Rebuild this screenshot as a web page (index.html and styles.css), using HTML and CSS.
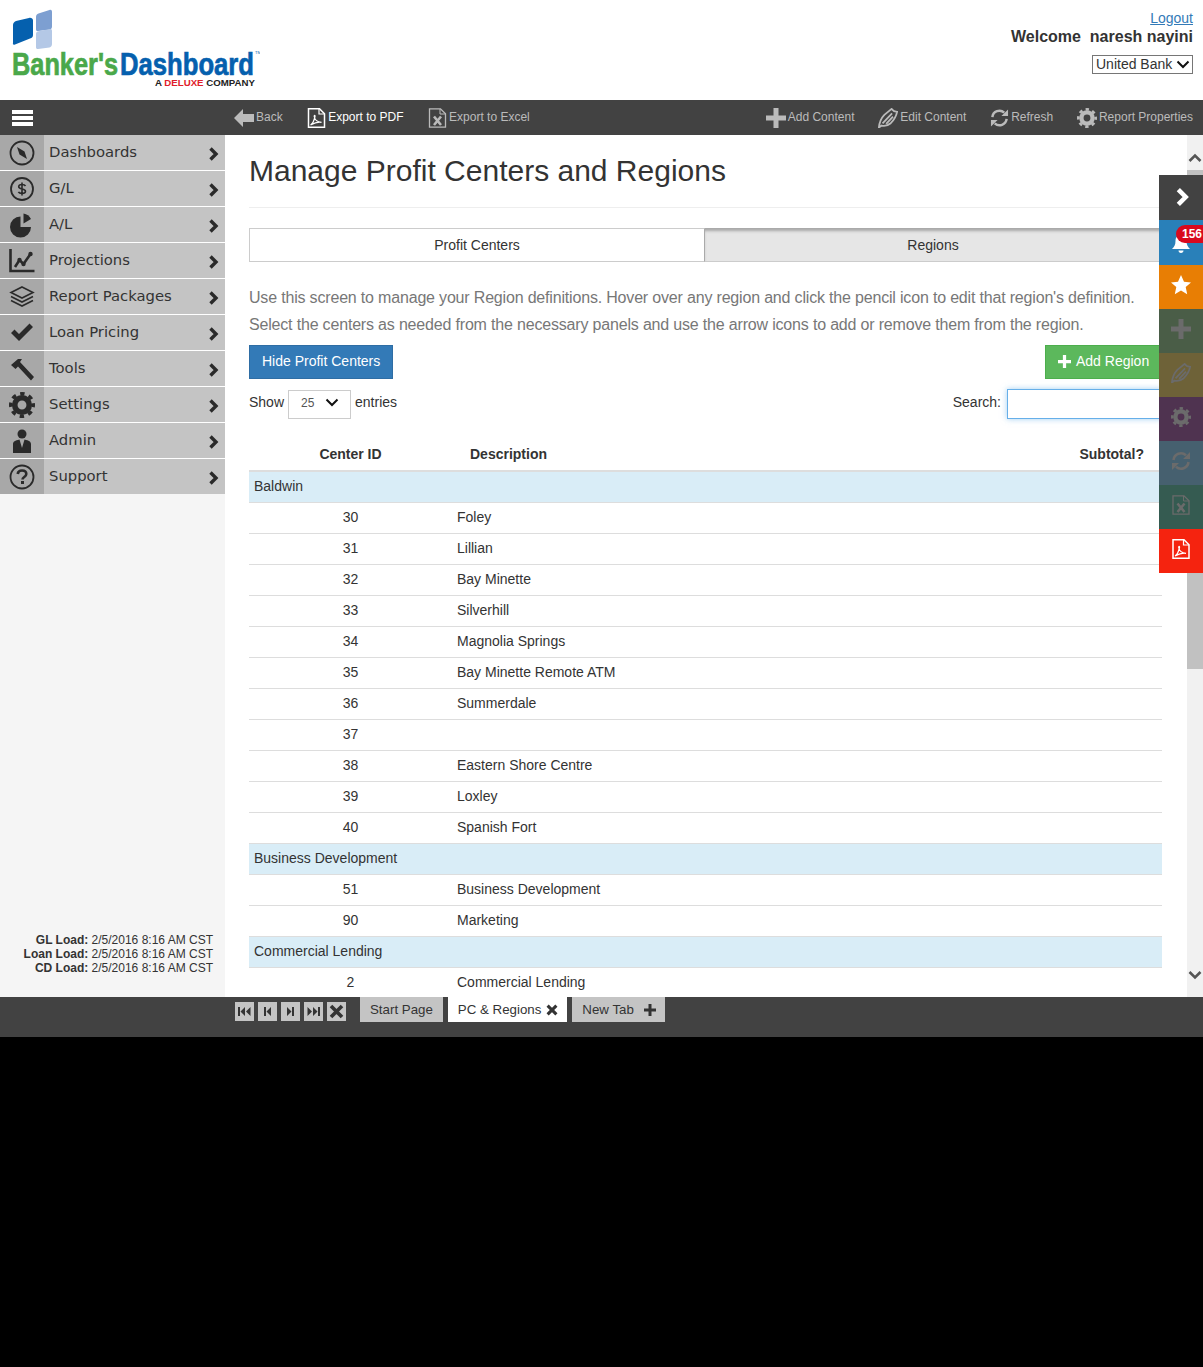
FILE: index.html
```html
<!DOCTYPE html>
<html lang="en">
<head>
<meta charset="utf-8">
<title>Manage Profit Centers and Regions</title>
<link rel="stylesheet" href="styles.css">
</head>
<body>
<svg class="defs" xmlns="http://www.w3.org/2000/svg">
  <symbol id="i-gear" viewBox="0 0 24 24"><circle cx="12" cy="12" r="6.7" fill="none" stroke="currentColor" stroke-width="5.2"/><circle cx="12" cy="12" r="10.4" fill="none" stroke="currentColor" stroke-width="3.2" stroke-dasharray="4.08 4.09" stroke-dashoffset="2.04"/></symbol>
  <symbol id="i-plus" viewBox="0 0 20 20"><path d="M7.500 0h5v7.500H20v5h-7.500V20h-5v-7.500H0v-5h7.500z" fill="currentColor"/></symbol>
  <symbol id="i-edit" viewBox="0 0 22 22"><path d="M1 21.500C1.500 16 3 11.500 7 7.500L15 1c1 1.500 4 3 6 3.200-1 5-3.500 9-7 12.500-3 2.500-7 3.300-10 2.600z" fill="none" stroke="currentColor" stroke-width="2"/><path d="M5 17L15.500 6M9 17.500l7.500-8" fill="none" stroke="currentColor" stroke-width="2"/></symbol>
  <symbol id="i-refresh" viewBox="0 0 20 20"><path d="M2.500 9A7.500 7.500 0 0 1 15 4.300M17.500 11A7.500 7.500 0 0 1 5 15.700" fill="none" stroke="currentColor" stroke-width="2.600"/><path d="M19 1v7h-7zM1 19v-7h7z" fill="currentColor"/></symbol>
  <symbol id="i-pdf" viewBox="0 0 18 20"><path d="M1 .8h11l5 5v13.400H1z" fill="none" stroke="currentColor" stroke-width="1.500"/><path d="M11.500 1v5h5.500" fill="none" stroke="currentColor" stroke-width="1.200"/><path d="M3 17c2-1 3.500-4 4.500-8.500.3-1.500-1-1.500-.8 0 .6 3.500 3 5.500 7.300 5.800-3.500-.8-7 .5-11 2.700z" fill="none" stroke="currentColor" stroke-width="1.200"/></symbol>
  <symbol id="i-xls" viewBox="0 0 18 20"><path d="M1 .8h11l5 5v13.400H1z" fill="none" stroke="currentColor" stroke-width="1.300"/><path d="M11.500 1v5h5.500" fill="none" stroke="currentColor" stroke-width="1"/><path d="M5.500 8.500l7 8.500M12.500 8.500l-7 8.500" fill="none" stroke="currentColor" stroke-width="2.600"/></symbol>
  <symbol id="i-chev" viewBox="0 0 12 14"><path d="M2.500 1.500L8 7l-5.500 5.500" fill="none" stroke="currentColor" stroke-width="3.400"/></symbol>
</svg>

<div class="app">
  <header class="masthead">
    <svg class="logo" viewBox="0 0 260 90" xmlns="http://www.w3.org/2000/svg">
      <path d="M13 25c0-2 1-3 3-4l13-3c2-.500 4 .500 4 2.500V35c0 2-1 3-3 3.500L15 44.500c-1.500.500-2.500 0-2-1.500z" fill="#0560ae"/>
      <path d="M36 17c0-2 1-3 2.500-3.500l11-3.500c1.500-.500 2.500.300 2.500 2v14.500c0 2-1 3-3 3.300L38 31c-1.500.200-2-.500-2-2z" fill="#7d9fd1"/>
      <path d="M36 34c0-1.500 1-2.500 2.500-2.700L50 29c1.500-.300 2 .500 2 2v13c0 2-1 3-2.500 3.500L38 49c-1.500 0-2-.500-2-2z" fill="#b4c8e6"/>
      <text class="logo-word logo-green" x="12" y="75" textLength="106" lengthAdjust="spacingAndGlyphs">Banker's</text>
      <text class="logo-word logo-blue" x="120" y="75" textLength="134" lengthAdjust="spacingAndGlyphs">Dashboard</text>
      <text class="logo-tm" x="255" y="54">TM</text>
      <text class="logo-sub" x="155" y="86" textLength="100" lengthAdjust="spacingAndGlyphs">A <tspan class="logo-red">DELUXE</tspan> COMPANY</text>
    </svg>
    <div class="user">
      <a class="logout" href="#">Logout</a>
      <div class="welcome">Welcome&nbsp; naresh nayini</div>
      <div class="bank-wrap">
        <select class="bank"><option>United Bank</option></select>
        <svg class="bank-chev" width="14" height="9" viewBox="0 0 14 9"><path d="M1.500 1.500L7 7l5.500-5.500" fill="none" stroke="#111" stroke-width="2"/></svg>
      </div>
    </div>
  </header>

  <nav class="toolbar">
    <div class="burger"><span></span><span></span><span></span></div>
    <div class="tools tools-left">
      <a class="tool"><svg class="ti" width="20" height="20" viewBox="0 0 20 20"><path d="M0 10L9 1v5h11v8H9v5z" fill="currentColor"/></svg><span>Back</span></a>
      <a class="tool tool-on"><svg class="ti" width="19" height="20"><use href="#i-pdf"/></svg><span>Export to PDF</span></a>
      <a class="tool"><svg class="ti" width="19" height="20"><use href="#i-xls"/></svg><span>Export to Excel</span></a>
    </div>
    <div class="tools">
      <a class="tool"><svg class="ti" width="20" height="20"><use href="#i-plus"/></svg><span>Add Content</span></a>
      <a class="tool"><svg class="ti" width="20" height="20"><use href="#i-edit"/></svg><span>Edit Content</span></a>
      <a class="tool"><svg class="ti" width="19" height="20"><use href="#i-refresh"/></svg><span>Refresh</span></a>
      <a class="tool"><svg class="ti" width="20" height="20"><use href="#i-gear"/></svg><span>Report Properties</span></a>
    </div>
  </nav>

  <div class="middle">
    <aside class="sidebar">
      <ul class="menu">
        <li class="menu-item"><span class="mi"><svg width="26" height="26" viewBox="0 0 26 26"><circle cx="13" cy="13" r="11.500" fill="none" stroke="currentColor" stroke-width="1.800"/><path d="M8 7l7.500 4.500L18 19l-7.500-4.500z" fill="currentColor"/></svg></span><span class="ml">Dashboards</span><svg class="mc" width="12" height="14"><use href="#i-chev"/></svg></li>
        <li class="menu-item"><span class="mi"><svg width="26" height="26" viewBox="0 0 26 26"><circle cx="13" cy="13" r="11" fill="none" stroke="currentColor" stroke-width="1.800"/><path d="M16.500 10c-.5-.9-1.800-1.500-3.500-1.500-2 0-3.300.9-3.300 2.200 0 3 6.800 1.600 6.800 4.600 0 1.300-1.400 2.200-3.500 2.200-1.800 0-3.100-.6-3.600-1.600M13 6.500v13" fill="none" stroke="currentColor" stroke-width="1.600"/></svg></span><span class="ml">G/L</span><svg class="mc" width="12" height="14"><use href="#i-chev"/></svg></li>
        <li class="menu-item"><span class="mi"><svg width="26" height="26" viewBox="0 0 26 26"><path d="M11.500 4.500v10.500h10.500A10.500 10.500 0 1 1 11.500 4.500z" fill="currentColor"/><path d="M14.500 1.500A10 10 0 0 1 22 7l-7.500 4.500z" fill="currentColor"/></svg></span><span class="ml">A/L</span><svg class="mc" width="12" height="14"><use href="#i-chev"/></svg></li>
        <li class="menu-item"><span class="mi"><svg width="26" height="26" viewBox="0 0 26 26"><path d="M1.500 1v22h24" fill="none" stroke="currentColor" stroke-width="2.600"/><path d="M6 19l4.500-7 4 4 7-10" fill="none" stroke="currentColor" stroke-width="2.600"/><circle cx="10.500" cy="12" r="2.200" fill="currentColor"/><circle cx="14.500" cy="16" r="2.200" fill="currentColor"/><circle cx="21.500" cy="6" r="2.200" fill="currentColor"/></svg></span><span class="ml">Projections</span><svg class="mc" width="12" height="14"><use href="#i-chev"/></svg></li>
        <li class="menu-item"><span class="mi"><svg width="26" height="26" viewBox="0 0 26 26"><g fill="none" stroke="currentColor" stroke-width="1.600"><path d="M13 3l11 5.500L13 14 2 8.500z"/><path d="M2 12.500l11 5.500 11-5.500"/><path d="M2 16.500l11 5.500 11-5.500"/></g></svg></span><span class="ml">Report Packages</span><svg class="mc" width="12" height="14"><use href="#i-chev"/></svg></li>
        <li class="menu-item"><span class="mi"><svg width="26" height="26" viewBox="0 0 26 26"><path d="M2 13l3.500-3.500 4.500 4.500L20.500 3.500 24 7 10 21z" fill="currentColor"/></svg></span><span class="ml">Loan Pricing</span><svg class="mc" width="12" height="14"><use href="#i-chev"/></svg></li>
        <li class="menu-item"><span class="mi"><svg width="26" height="26" viewBox="0 0 26 26"><path d="M2 9l7-6h4l-2 3 14 15-3 3.500L9 10.500 6.500 13z" fill="currentColor"/></svg></span><span class="ml">Tools</span><svg class="mc" width="12" height="14"><use href="#i-chev"/></svg></li>
        <li class="menu-item"><span class="mi"><svg width="26" height="26"><use href="#i-gear"/></svg></span><span class="ml">Settings</span><svg class="mc" width="12" height="14"><use href="#i-chev"/></svg></li>
        <li class="menu-item"><span class="mi"><svg width="26" height="26" viewBox="0 0 26 26"><circle cx="13" cy="6" r="4.500" fill="currentColor"/><path d="M4 25v-9c0-2.500 2-3.500 6.500-4.500L13 20l2.500-8.500c4.500 1 6.500 2 6.500 4.500v9z" fill="currentColor"/></svg></span><span class="ml">Admin</span><svg class="mc" width="12" height="14"><use href="#i-chev"/></svg></li>
        <li class="menu-item"><span class="mi"><svg width="26" height="26" viewBox="0 0 26 26"><circle cx="13" cy="13" r="11.500" fill="none" stroke="currentColor" stroke-width="1.800"/><path d="M8.700 10c.3-2.200 2-3.500 4.300-3.500 2.600 0 4.300 1.500 4.300 3.500 0 3-3.800 3-3.800 5.500" fill="none" stroke="currentColor" stroke-width="2.600"/><rect x="12" y="17" width="3" height="3" fill="currentColor"/></svg></span><span class="ml">Support</span><svg class="mc" width="12" height="14"><use href="#i-chev"/></svg></li>
      </ul>
      <div class="loads">
        <div><b>GL Load:</b> 2/5/2016 8:16 AM CST</div>
        <div><b>Loan Load:</b> 2/5/2016 8:16 AM CST</div>
        <div><b>CD Load:</b> 2/5/2016 8:16 AM CST</div>
      </div>
    </aside>

    <main class="content">
      <h1 class="title">Manage Profit Centers and Regions</h1>
      <div class="tabs">
        <div class="tab tab-active">Profit Centers</div>
        <div class="tab">Regions</div>
      </div>
      <p class="intro">Use this screen to manage your Region definitions. Hover over any region and click the pencil icon to edit that region's definition. Select the centers as needed from the necessary panels and use the arrow icons to add or remove them from the region.</p>
      <div class="actions">
        <button class="btn btn-blue">Hide Profit Centers</button>
        <button class="btn btn-green"><svg class="btn-plus" width="13" height="13"><use href="#i-plus"/></svg>Add Region</button>
      </div>
      <div class="filters">
        <div class="show"><span class="f-label">Show</span><span class="len">25<svg width="14" height="9" viewBox="0 0 14 9"><path d="M1.500 1.500L7 7l5.500-5.500" fill="none" stroke="#111" stroke-width="2"/></svg></span><span class="f-label">entries</span></div>
        <div class="search"><span class="f-label">Search:</span><span class="search-box"></span></div>
      </div>
      <table class="grid">
        <thead><tr><th class="c-id">Center ID</th><th class="c-desc">Description</th><th class="c-sub">Subtotal?</th></tr></thead>
        <tbody>
          <tr class="group"><td colspan="3">Baldwin</td></tr>
          <tr><td class="c-id">30</td><td>Foley</td><td></td></tr>
          <tr><td class="c-id">31</td><td>Lillian</td><td></td></tr>
          <tr><td class="c-id">32</td><td>Bay Minette</td><td></td></tr>
          <tr><td class="c-id">33</td><td>Silverhill</td><td></td></tr>
          <tr><td class="c-id">34</td><td>Magnolia Springs</td><td></td></tr>
          <tr><td class="c-id">35</td><td>Bay Minette Remote ATM</td><td></td></tr>
          <tr><td class="c-id">36</td><td>Summerdale</td><td></td></tr>
          <tr><td class="c-id">37</td><td></td><td></td></tr>
          <tr><td class="c-id">38</td><td>Eastern Shore Centre</td><td></td></tr>
          <tr><td class="c-id">39</td><td>Loxley</td><td></td></tr>
          <tr><td class="c-id">40</td><td>Spanish Fort</td><td></td></tr>
          <tr class="group"><td colspan="3">Business Development</td></tr>
          <tr><td class="c-id">51</td><td>Business Development</td><td></td></tr>
          <tr><td class="c-id">90</td><td>Marketing</td><td></td></tr>
          <tr class="group"><td colspan="3">Commercial Lending</td></tr>
          <tr><td class="c-id">2</td><td>Commercial Lending</td><td></td></tr>
        </tbody>
      </table>
    </main>

    <div class="scrollbar">
      <svg class="sb-arrow" width="14" height="10" viewBox="0 0 14 10"><path d="M1.500 8L7 2.500 12.500 8" fill="none" stroke="#555" stroke-width="2.600"/></svg>
      <div class="sb-thumb"></div>
      <svg class="sb-arrow sb-down" width="14" height="10" viewBox="0 0 14 10"><path d="M1.500 2L7 7.500 12.500 2" fill="none" stroke="#555" stroke-width="2.600"/></svg>
    </div>

    <div class="quick">
      <div class="q q-dark"><svg class="q-chev" width="16" height="20" viewBox="0 0 12 14"><use href="#i-chev"/></svg></div>
      <div class="q q-blue">
        <svg class="bell" width="20" height="20" viewBox="0 0 20 20"><path d="M10 1c3.500 0 5.500 2.500 5.500 6 0 4 1.500 6 3.500 8H1c2-2 3.500-4 3.500-8 0-3.500 2-6 5.500-6zM7.500 16.500h5c0 1.500-1 2.500-2.500 2.500s-2.500-1-2.500-2.500z" fill="currentColor"/></svg>
        <span class="badge">156</span>
      </div>
      <div class="q q-orange"><svg width="20" height="20" viewBox="0 0 20 20"><path d="M10 0l3 6.700 7 .7-5.300 4.700 1.500 7.200L10 15.600 3.800 19.300l1.500-7.200L0 7.400l7-.7z" fill="currentColor"/></svg></div>
      <div class="q q-green"><svg width="20" height="20"><use href="#i-plus"/></svg></div>
      <div class="q q-olive"><svg width="20" height="20"><use href="#i-edit"/></svg></div>
      <div class="q q-purple"><svg width="20" height="20"><use href="#i-gear"/></svg></div>
      <div class="q q-slate"><svg width="20" height="20"><use href="#i-refresh"/></svg></div>
      <div class="q q-teal"><svg width="18" height="20"><use href="#i-xls"/></svg></div>
      <div class="q q-red"><svg width="18" height="20"><use href="#i-pdf"/></svg></div>
    </div>
  </div>

  <footer class="tabbar">
    <div class="pager">
      <span class="pg"><svg width="13" height="9" viewBox="0 0 13 9"><path d="M0 0h2v9H0zM7 0v9L2.500 4.500zM12.500 0v9L8 4.500z" fill="#333"/></svg></span>
      <span class="pg"><svg width="7" height="9" viewBox="0 0 7 9"><path d="M0 0h2v9H0zM7 0v9L2.500 4.500z" fill="#333"/></svg></span>
      <span class="pg"><svg width="7" height="9" viewBox="0 0 7 9"><path d="M7 0H5v9h2zM0 0v9l4.500-4.500z" fill="#333"/></svg></span>
      <span class="pg"><svg width="13" height="9" viewBox="0 0 13 9"><path d="M13 0h-2v9h2zM6 0v9l4.500-4.500zM.5 0v9L5 4.500z" fill="#333"/></svg></span>
      <span class="pg"><svg width="15" height="15" viewBox="0 0 15 15"><path d="M2 2l11 11M13 2L2 13" stroke="#333" stroke-width="3.600"/></svg></span>
    </div>
    <div class="doc-tabs">
      <div class="doc">Start Page</div>
      <div class="doc doc-on">PC &amp; Regions<svg width="12" height="12" viewBox="0 0 15 15"><path d="M2 2l11 11M13 2L2 13" stroke="#333" stroke-width="3.800"/></svg></div>
      <div class="doc doc-new">New Tab<svg class="doc-add" width="12" height="12" viewBox="0 0 20 20"><path d="M7.500 0h5v7.500H20v5h-7.500V20h-5v-7.500H0v-5h7.500z" fill="#333"/></svg></div>
    </div>
  </footer>
</div>
</body>
</html>
```

FILE: styles.css
```css
* { box-sizing: border-box; }
html, body { margin: 0; background: #000; }
body { font-family: "Liberation Sans", Arial, sans-serif; font-size: 14px; color: #333; }
.defs { display: none; }

.app { width: 1203px; height: 1037px; display: flex; flex-direction: column; }

/* header */
.masthead { height: 100px; background: #fff; display: flex; justify-content: space-between; flex: none; }
.logo { width: 260px; height: 90px; }
.logo-word { font-family: "Liberation Sans", Arial, sans-serif; font-weight: 700; font-size: 32px; stroke-width: .7px; }
.logo-green { fill: #4aa84a; stroke: #4aa84a; }
.logo-blue { fill: #0560ae; stroke: #0560ae; }
.logo-tm { font-family: "Liberation Sans", Arial, sans-serif; font-size: 4px; fill: #0560ae; }
.logo-sub { font-family: "Liberation Sans", Arial, sans-serif; font-weight: 700; font-size: 8.500px; fill: #222; }
.logo-red { fill: #e0202a; font-weight: 700; }
.user { display: flex; flex-direction: column; align-items: flex-end; padding: 10px 10px 0 0; }
.logout { color: #337ab7; text-decoration: underline; font-size: 14px; line-height: 16px; }
.welcome { font-weight: 700; font-size: 16px; line-height: 18px; color: #333; margin-top: 2px; }
.bank-wrap { position: relative; width: 101px; height: 19px; margin-top: 9px; }
.bank { appearance: none; -webkit-appearance: none; display: block; width: 101px; height: 19px; font: 14px "Liberation Sans", Arial, sans-serif; color: #333; background: #fff; border: 1px solid #767676; padding: 0 0 1px 3px; border-radius: 0; }
.bank-chev { position: absolute; right: 3px; top: 5px; }

/* toolbar */
.toolbar { height: 35px; background: #424242; display: flex; align-items: center; color: #bbb; font-size: 12px; flex: none; padding-right: 10px; }
.burger { width: 21px; margin-left: 12px; display: flex; flex-direction: column; gap: 2px; margin-top: 1px; }
.burger span { height: 4px; background: #fff; }
.tools { display: flex; gap: 23.800px; align-items: center; }
.tools-left { margin-left: 201px; margin-right: auto; gap: 24.500px; }
.tool { display: flex; align-items: center; gap: 2px; }
.tool span { margin-bottom: 2px; }
.tool-on { color: #fff; }
.ti { flex: none; }

/* body */
.middle { flex: 1; display: flex; position: relative; min-height: 0; background: #fff; }
.sidebar { width: 225px; flex: none; background: #f5f5f5; display: flex; flex-direction: column; justify-content: space-between; }
.menu { list-style: none; margin: 0; padding: 0; }
.menu-item { height: 36px; display: flex; align-items: center; background: #c4c4c4; border-bottom: 1px solid #fff; font-family: "DejaVu Sans", Verdana, sans-serif; font-size: 14.800px; color: #333; }
.menu-item:last-child { height: 35px; border-bottom: 0; }
.mi { width: 44px; height: 100%; background: #a8a8a8; display: flex; align-items: center; justify-content: center; color: #2a2a2a; flex: none; }
.ml { flex: 1; padding: 0 0 2px 5px; }
.mc { color: #2a2a2a; margin-right: 5px; margin-top: 2px; }
.loads { text-align: right; font-size: 12px; line-height: 14px; padding: 0 12px 22px 0; color: #333; }

.content { flex: 1; min-width: 0; overflow: hidden; padding: 0 0 0 24px; background: #fff; }
.title { margin: 0; height: 73px; padding-top: 19px; font-size: 30px; line-height: 34px; font-weight: 400; color: #333; border-bottom: 1px solid #eee; width: 913px; }
.tabs { display: flex; margin-top: 20px; width: 912px; height: 34px; }
.tab { flex: 1; display: flex; align-items: center; justify-content: center; background: #e6e6e6; border-top: 1px solid #aaa; border-bottom: 1px solid #ccc; box-shadow: inset 0 3px 3px -1px #a8a8a8; }
.tab-active { background: #fff; border: 1px solid #ccc; border-right: 1px solid #aaa; flex: 0 0 456px; box-shadow: none; }
.intro { margin: 22px 0 0; width: 905px; font-size: 16px; line-height: 27px; color: #777; letter-spacing: -0.180px; }
.actions { display: flex; justify-content: space-between; margin-top: 7px; width: 913px; }
.btn { height: 34px; border: 1px solid; border-radius: 0; color: #fff; font: 14px "Liberation Sans", Arial, sans-serif; padding: 0 12px 2px; display: flex; align-items: center; white-space: nowrap; }
.btn-blue { background: #337ab7; border-color: #2e6da4; }
.btn-green { background: #5cb85c; border-color: #4cae4c; width: 117px; }
.btn-plus { margin: 0 5px 0 0; flex: none; }
.filters { display: flex; justify-content: space-between; align-items: center; margin-top: 10px; width: 913px; height: 30px; }
.show { display: flex; align-items: center; gap: 4px; }
.f-label { margin-bottom: 4px; }
.len { width: 63px; height: 29px; border: 1px solid #ccc; display: flex; align-items: center; justify-content: space-between; padding: 0 11px 3px 12px; font-size: 12px; color: #555; }
.search { display: flex; align-items: center; gap: 6px; }
.search-box { width: 155px; height: 30px; border: 1px solid #66afe9; box-shadow: 0 0 6px rgba(102, 175, 233, .6); background: #fff; }
.grid { border-collapse: collapse; width: 913px; margin-top: 19px; table-layout: fixed; }
.grid th { height: 33px; padding: 0 18px; font-weight: 700; text-align: left; border-bottom: 2px solid #ddd; color: #333; }
.grid th.c-id { text-align: center; width: 203px; }
.grid th.c-sub { text-align: right; width: 140px; }
.grid td { height: 31px; padding: 0 5px 2px; border-bottom: 1px solid #ddd; color: #333; }
.grid td.c-id { text-align: center; }
.group td { background: #d9edf7; }

/* scrollbar */
.scrollbar { width: 16px; flex: none; background: #f1f1f1; display: flex; flex-direction: column; align-items: center; }
.sb-arrow { margin-top: 18px; flex: none; }
.sb-thumb { width: 16px; height: 499px; margin-top: 7px; background: #c1c1c1; }
.sb-down { margin-top: 301px; }

/* quick panel */
.quick { position: absolute; right: 0; top: 40px; width: 44px; display: flex; flex-direction: column; }
.q { height: 44px; padding-bottom: 4px; display: flex; align-items: center; justify-content: center; color: #6b6b6b; position: relative; }
.q-dark { height: 45px; padding-bottom: 1px; background: #424242; color: #fff; }
.q-chev { margin-left: 3px; }
.q-blue { height: 45px; padding-bottom: 0; background: #2980b9; color: #fff; }
.q-orange { background: #e87e04; color: #fff; }
.q-green { background: #4a5d47; }
.q-olive { background: #6e6238; }
.q-purple { background: #4f3350; }
.q-slate { background: #46606f; }
.q-teal { background: #355b51; }
.q-red { background: #f5230f; color: #fff; }
.bell { margin-top: 2px; margin-right: 1px; }
.badge { position: absolute; right: 0; top: 5px; width: 27px; height: 18px; padding-right: 1px; background: #d9091e; color: #fff; font-size: 12px; font-weight: 700; border-radius: 9px 0 0 9px; text-align: right; line-height: 18px; }

/* bottom */
.tabbar { height: 40px; background: #424242; display: flex; flex: none; padding-left: 235px; }
.pager { display: flex; gap: 4px; margin-top: 5px; }
.pg { width: 19px; height: 19px; background: #c4c4c4; display: flex; align-items: center; justify-content: center; }
.doc-tabs { display: flex; gap: 5px; margin-left: 14px; }
.doc { height: 25px; background: #c4c4c4; color: #333; font-size: 13.300px; padding: 0 10px; display: flex; align-items: center; gap: 5px; }
.doc-on { background: #fff; padding-right: 9px; }
.doc-new { padding-right: 9px; }
.doc-add { margin-left: 5px; }
```
